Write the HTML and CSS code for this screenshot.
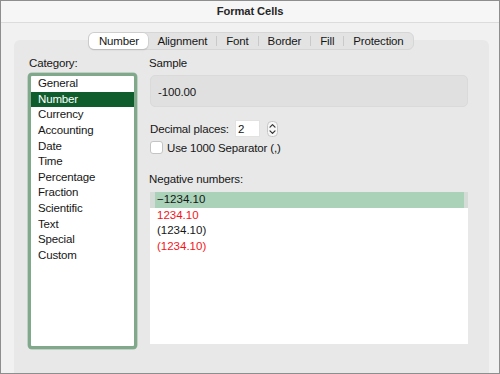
FILE: index.html
```html
<!DOCTYPE html>
<html>
<head>
<meta charset="utf-8">
<link rel="stylesheet" href="styles.css">
</head>
<body>
<div class="window">
  <div class="titlebar">Format Cells</div>
  <div class="tabs">
    <span class="tab selected">Number</span>
    <span class="tab">Alignment</span>
    <span class="sep"></span>
    <span class="tab">Font</span>
    <span class="sep"></span>
    <span class="tab">Border</span>
    <span class="sep"></span>
    <span class="tab">Fill</span>
    <span class="sep"></span>
    <span class="tab">Protection</span>
  </div>
  <div class="panel">
    <div class="left">
      <div class="label">Category:</div>
      <ul class="category">
        <li>General</li>
        <li class="active">Number</li>
        <li>Currency</li>
        <li>Accounting</li>
        <li>Date</li>
        <li>Time</li>
        <li>Percentage</li>
        <li>Fraction</li>
        <li>Scientific</li>
        <li>Text</li>
        <li>Special</li>
        <li>Custom</li>
      </ul>
    </div>
    <div class="right">
      <div class="label">Sample</div>
      <div class="sample">-100.00</div>
      <div class="decimal-row">
        <span>Decimal places:</span>
        <span class="input">2</span>
        <svg class="spinner" width="11" height="16" viewBox="0 0 11 16">
          <rect x="0.5" y="0.5" width="10" height="15" rx="4" fill="#f7f7f7" stroke="#c6c6c6"/>
          <polyline points="3,6.2 5.5,3.7 8,6.2" fill="none" stroke="#333" stroke-width="1.2" stroke-linecap="round" stroke-linejoin="round"/>
          <polyline points="3,9.8 5.5,12.3 8,9.8" fill="none" stroke="#333" stroke-width="1.2" stroke-linecap="round" stroke-linejoin="round"/>
        </svg>
      </div>
      <div class="check-row">
        <span class="checkbox"></span>
        <span>Use 1000 Separator (,)</span>
      </div>
      <div class="label neg-label">Negative numbers:</div>
      <ul class="negatives">
        <li class="hl">&minus;1234.10</li>
        <li class="red">1234.10</li>
        <li>(1234.10)</li>
        <li class="red">(1234.10)</li>
      </ul>
    </div>
  </div>
</div>
</body>
</html>
```

FILE: styles.css
```css
* { box-sizing: border-box; }
html, body {
  margin: 0;
  padding: 0;
}
body {
  width: 500px;
  height: 374px;
  overflow: hidden;
  font-family: "Liberation Sans", Arial, sans-serif;
  font-size: 11.5px;
  letter-spacing: -0.15px;
  color: #161616;
  background: #f1f1f1;
}
.window {
  width: 500px;
  height: 374px;
  border: 1px solid #8e8e8e;
  background: #f1f1f1;
  display: flex;
  flex-direction: column;
}
.titlebar {
  height: 22px;
  flex: none;
  background: #f6f6f6;
  border-bottom: 1px solid #dcdcdc;
  text-align: center;
  font-weight: bold;
  font-size: 11.2px;
  letter-spacing: -0.1px;
  line-height: 20px;
  color: #262626;
}
.tabs {
  flex: none;
  align-self: center;
  margin-top: 9px;
  margin-left: 2px;
  height: 18px;
  display: flex;
  align-items: center;
  background: #e3e3e3;
  border: 1px solid #d6d6d6;
  border-radius: 6px;
  position: relative;
  z-index: 1;
}
.tab {
  padding: 0 9px;
  line-height: 16px;
  height: 16px;
}
.tab.selected {
  padding: 0 9.5px;
  background: #ffffff;
  border-radius: 5px;
  box-shadow: 0 0 0 0.5px #c8c8c8, 0 1px 1.5px rgba(0,0,0,0.18);
}
.sep {
  width: 1px;
  height: 10px;
  background: #c9c9c9;
}
.panel {
  flex: 1;
  margin: -10px 10px 0 13px;
  background: #e8e8e8;
  border-radius: 6px 6px 0 0;
  padding: 16px 21px 0 14px;
  display: flex;
  gap: 13px;
}
.left {
  width: 109px;
  flex: none;
}
.right {
  flex: 1;
  display: flex;
  flex-direction: column;
}
.label {
  line-height: 15px;
  height: 15px;
  padding-left: 1px;
}
.left .label { margin-bottom: 2px; }
.right .label { margin-bottom: 4px; padding-left: 0; margin-left: -1px; }
.category {
  list-style: none;
  margin: 0;
  padding: 0;
  height: 276px;
  background: #ffffff;
  border: 3px solid #80a98b;
  border-radius: 4px;
  box-shadow: 0 0 0 0.5px #9bb5a2;
}
.category li {
  height: 15.65px;
  line-height: 15.65px;
  padding-left: 7px;
}
.category li.active {
  background: #0f5d2d;
  color: #ffffff;
}
.sample {
  height: 32px;
  line-height: 32px;
  background: #e0e0e0;
  border: 1px solid #dadada;
  border-radius: 5px;
  padding-left: 7px;
}
.decimal-row {
  margin-top: 13px;
  height: 17px;
  display: flex;
  align-items: center;
}
.input {
  margin-left: 6px;
  width: 25px;
  height: 17px;
  line-height: 17px;
  background: #ffffff;
  border: 1px solid #e2e2e2;
  padding-left: 2px;
}
.spinner {
  margin-left: 7px;
  display: block;
}
.check-row {
  margin-top: 4px;
  height: 13px;
  display: flex;
  align-items: center;
  gap: 4px;
}
.checkbox {
  width: 13px;
  height: 13px;
  background: #ffffff;
  border: 1px solid #c4c4c4;
  border-radius: 3px;
}
.right .neg-label {
  margin-top: 18px;
  margin-bottom: 5px;
}
.negatives {
  list-style: none;
  margin: 0;
  padding: 0;
  height: 152px;
  background: #ffffff;
}
.negatives li {
  height: 15.6px;
  line-height: 15.6px;
  padding-left: 7px;
  letter-spacing: 0;
}
.negatives li.hl {
  background: #a9d2b8;
  border-left: 5px solid #d5dbd7;
  border-right: 4px solid #d5dbd7;
  padding-left: 2px;
}
.negatives li.red {
  color: #f5141a;
}
```
